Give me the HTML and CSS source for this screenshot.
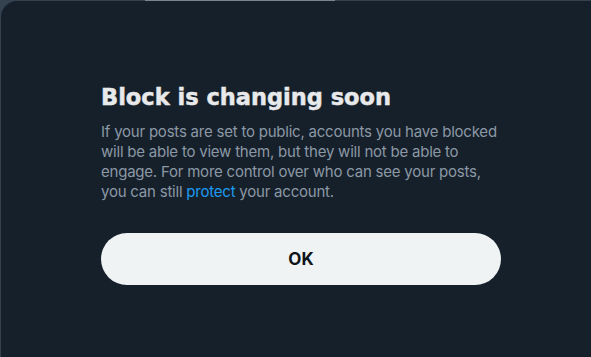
FILE: index.html
```html
<!DOCTYPE html>
<html lang="en">
<head>
<meta charset="utf-8">
<title>Block is changing soon</title>
<link rel="stylesheet" href="styles.css">
</head>
<body>
<div class="backdrop">
  <div class="strip"></div>
  <div class="dialog">
    <div class="content">
      <h1 class="title">Block is changing soon</h1>
      <p class="text">If your posts are set to public, accounts you have blocked will be able to view them, but they will not be able to engage. For more control over who can see your posts, you can still <a class="link" href="#">protect</a> your account.</p>
      <button class="btn" type="button">OK</button>
    </div>
  </div>
</div>
</body>
</html>
```
FILE: styles.css
```css
html, body {
  margin: 0;
  padding: 0;
  width: 591px;
  height: 357px;
  overflow: hidden;
  background: #34414e;
}
.backdrop {
  position: relative;
  width: 591px;
  height: 357px;
  padding: 1px 0 0 1px;
  box-sizing: border-box;
}
.strip {
  position: absolute;
  left: 145px;
  top: 0;
  width: 190px;
  height: 1px;
  background: #7d848b;
}
.dialog {
  height: 100%;
  background: #16202b;
  border-top-left-radius: 16px;
  box-sizing: border-box;
  padding: 82px 0 0 100px;
  font-family: "Inter", "Liberation Sans", sans-serif;
}
.content {
  width: 400px;
  display: flex;
  flex-direction: column;
}
.title {
  margin: 0;
  font-family: "DejaVu Sans", "Inter", sans-serif;
  font-size: 22.5px;
  line-height: 28px;
  font-weight: 700;
  color: #e7e9ea;
  -webkit-text-stroke: 0.5px #e7e9ea;
}
.text {
  margin: 11px 0 0;
  font-size: 15px;
  line-height: 20px;
  letter-spacing: -0.22px;
  color: #8b98a5;
}
.link {
  color: #1d9bf0;
  text-decoration: none;
}
.btn {
  margin-top: 31px;
  width: 400px;
  height: 52px;
  border: none;
  border-radius: 26px;
  background: #eff3f4;
  color: #0f1419;
  font-family: "Inter", "Liberation Sans", sans-serif;
  font-size: 17px;
  font-weight: 700;
  padding: 0;
}
```
